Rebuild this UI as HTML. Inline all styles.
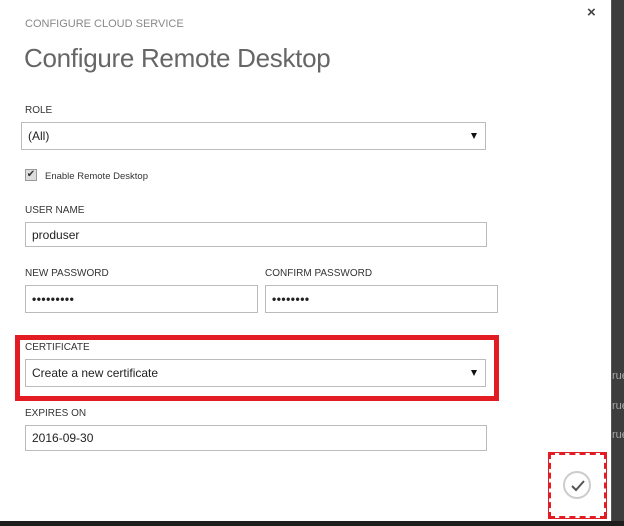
<!DOCTYPE html>
<html><head><style>
body{margin:0;width:624px;height:526px;overflow:hidden;background:#1e1e1e;font-family:"Liberation Sans",sans-serif;position:relative}
.p{position:absolute;left:0;top:0;width:611px;height:521px;background:#fff}
.side{position:absolute;left:611px;top:0;width:13px;height:521px;background:#3d3d3d;border-left:1px solid #555}
.a{position:absolute}
.lbl{position:absolute;font-size:10px;color:#333}
.in{position:absolute;border:1px solid #bbb;background:#fff;box-sizing:border-box;font-size:12px;color:#222;padding-left:6px;display:flex;align-items:center}
.arr{position:absolute;right:8px;top:50%;margin-top:-3px;width:0;height:0;border-left:3.5px solid transparent;border-right:3.5px solid transparent;border-top:6px solid #111}
.dots{letter-spacing:0.5px;font-size:12px;font-weight:bold}
</style></head><body>
<div class="p"></div>
<div class="side"></div>
<div class="a" style="left:612px;top:370px;font-size:11px;color:#aaa">rue</div>
<div class="a" style="left:612px;top:400px;font-size:11px;color:#aaa">rue</div>
<div class="a" style="left:612px;top:429px;font-size:11px;color:#aaa">rue</div>
<div class="a" style="left:587px;top:4px;font-size:15px;font-weight:bold;color:#444">×</div>
<div class="a" style="left:25px;top:18px;font-size:11px;color:#888">CONFIGURE CLOUD SERVICE</div>
<div class="a" style="left:24px;top:43px;font-size:26px;color:#666;letter-spacing:-0.3px">Configure Remote Desktop</div>
<div class="lbl" style="left:25px;top:105px">ROLE</div>
<div class="in" style="left:21px;top:122px;width:465px;height:28px">(All)<span class="arr"></span></div>
<div class="a" style="left:25px;top:169px;width:10px;height:10px;border:1px solid #999;background:#ddd;font-size:10px;line-height:10px;text-align:center;color:#333">✔</div>
<div class="a" style="left:45px;top:171px;font-size:9.5px;color:#333">Enable Remote Desktop</div>
<div class="lbl" style="left:25px;top:205px">USER NAME</div>
<div class="in" style="left:25px;top:222px;width:462px;height:25px">produser</div>
<div class="lbl" style="left:25px;top:268px">NEW PASSWORD</div>
<div class="in" style="left:25px;top:285px;width:233px;height:28px"><span class="dots">•••••••••</span></div>
<div class="lbl" style="left:265px;top:268px">CONFIRM PASSWORD</div>
<div class="in" style="left:265px;top:285px;width:233px;height:28px"><span class="dots">••••••••</span></div>
<div class="a" style="left:15px;top:335px;width:474px;height:56px;border:5px solid #e31b23"></div>
<div class="lbl" style="left:25px;top:342px">CERTIFICATE</div>
<div class="in" style="left:25px;top:359px;width:461px;height:28px">Create a new certificate<span class="arr"></span></div>
<div class="lbl" style="left:25px;top:408px">EXPIRES ON</div>
<div class="in" style="left:25px;top:425px;width:462px;height:26px">2016-09-30</div>
<div class="a" style="left:549px;top:453px;width:53px;height:61px;border:2px dashed #e31b23;outline:1px solid #e31b23"></div>
<div class="a" style="left:563px;top:471px;width:28px;height:28px;border:2px solid #ccc;border-radius:50%;box-sizing:border-box"></div>
<svg class="a" style="left:563px;top:471px" width="30" height="30"><path d="M9 15 L13 19 L21 10" fill="none" stroke="#555" stroke-width="2"/></svg>
</body></html>
